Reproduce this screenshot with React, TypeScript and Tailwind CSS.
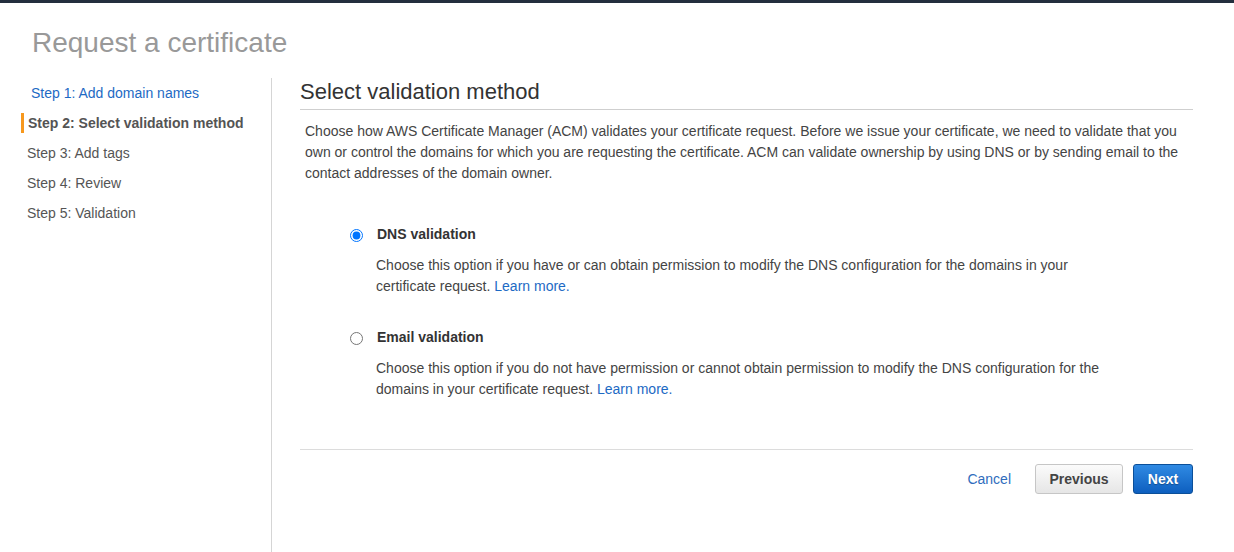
import React from "react";

const steps = [
  { label: "Step 1: Add domain names", state: "link" },
  { label: "Step 2: Select validation method", state: "active" },
  { label: "Step 3: Add tags", state: "todo" },
  { label: "Step 4: Review", state: "todo" },
  { label: "Step 5: Validation", state: "todo" },
];

function Option({
  title,
  checked,
  children,
  className = "",
}: {
  title: string;
  checked?: boolean;
  children: React.ReactNode;
  className?: string;
}) {
  return (
    <label className={`flex items-start ${className}`}>
      <input
        type="radio"
        name="validation"
        defaultChecked={checked}
        className="m-0 mt-[4.5px] h-[13px] w-[13px] shrink-0"
      />
      <div className="ml-[14px]">
        <div className="text-[14px] font-bold leading-[20px] text-[#333]">{title}</div>
        <p className="mt-[11px] -ml-px w-[736px] text-[14px] leading-[21px] text-[#444]">{children}</p>
      </div>
    </label>
  );
}

export default function App() {
  return (
    <div className="min-h-screen bg-white font-['Liberation_Sans',Arial,sans-serif]">
      <div className="h-[3px] bg-[#232f3e]" />

      <h1 className="mt-[24px] pl-[32px] text-[28px] leading-[32px] text-[#999]">Request a certificate</h1>

      <div className="mt-[19px] flex">
        {/* wizard steps */}
        <aside className="min-h-[474px] w-[272px] shrink-0 border-r border-[#d5d5d5] pl-[21px] pt-[5px]">
          {steps.map((s) => (
            <div
              key={s.label}
              className={`mb-[10px] h-[20px] border-l-[3px] text-[14px] leading-[20px] ${
                s.state === "active"
                  ? "border-[#f7981d] pl-[4px] font-bold text-[#545454]"
                  : s.state === "link"
                  ? "border-transparent pl-[7px] text-[#1d6ac4]"
                  : "border-transparent pl-[3px] text-[#555]"
              }`}
            >
              {s.label}
            </div>
          ))}
        </aside>

        <main className="flex-1 pl-[28px] pr-[41px]">
          <h2 className="border-b border-[#cfcfcf] pb-[4px] pt-[1px] text-[22px] leading-[26px] text-[#333]">
            Select validation method
          </h2>
          <p className="mt-[11px] px-[5px] text-[14px] leading-[21px] text-[#444]">
            Choose how AWS Certificate Manager (ACM) validates your certificate request. Before we issue your
            certificate, we need to validate that you own or control the domains for which you are requesting the
            certificate. ACM can validate ownership by using DNS or by sending email to the contact addresses of the
            domain owner.
          </p>

          <div className="ml-[50px] mt-[40px]">
            <Option title="DNS validation" checked>
              Choose this option if you have or can obtain permission to modify the DNS configuration for the domains
              in your certificate request. <a className="text-[#1d6ac4]">Learn more.</a>
            </Option>
            <Option title="Email validation" className="mt-[30px]">
              Choose this option if you do not have permission or cannot obtain permission to modify the DNS
              configuration for the domains in your certificate request.{" "}
              <a className="text-[#1d6ac4]">Learn more.</a>
            </Option>
          </div>

          <div className="mt-[49px] flex items-center justify-end border-t border-[#dcdcdc] pt-[14px]">
            <button className="mr-[24px] text-[14px] text-[#2f6dbd]">Cancel</button>
            <button className="h-[30px] w-[88px] rounded-[3px] border border-[#c6c6c6] bg-gradient-to-b from-[#fbfbfb] to-[#e6e6e6] text-[14px] font-bold text-[#444]">
              Previous
            </button>
            <button className="ml-[10px] h-[30px] w-[60px] rounded-[3px] border border-[#0b4f99] bg-gradient-to-b from-[#2f8ae3] to-[#0d5fbf] text-[14px] font-bold text-white [text-shadow:0_1px_1px_rgba(0,0,0,0.3)]">
              Next
            </button>
          </div>
        </main>
      </div>
    </div>
  );
}
